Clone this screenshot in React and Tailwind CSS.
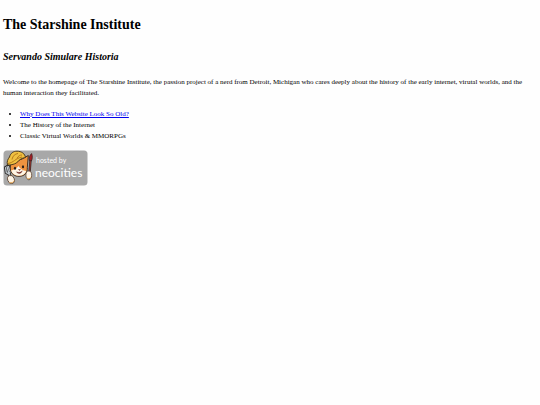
function NeocitiesBadge() {
  return (
    <svg viewBox="0 0 85 36" className="block h-9 w-[85px]" role="img" aria-label="Hosted by Neocities">
      <rect x="0.5" y="0.5" width="84" height="35" rx="3.5" fill="#a8a8a8" />
      {/* fork */}
      <g stroke="#333" strokeWidth="3.2" strokeLinecap="round" fill="none">
        <path d="M2.500 17.500l.8 5 2.700 1.500 1.200-2.500-1.700-5M4 16.500l2 7.500 3 8" />
      </g>
      <g stroke="#c4cbd0" strokeWidth="1.200" strokeLinecap="round" fill="none">
        <path d="M2.500 17.500l.8 5 2.700 1.500 1.200-2.500-1.700-5M4 16.500l2 7.500 3 8" />
      </g>
      {/* paintbrush */}
      <path d="M27.500 10.500L26 29" stroke="#333" strokeWidth="2.400" strokeLinecap="round" />
      <path d="M27.500 11L26 27" stroke="#8c3028" strokeWidth="1.200" />
      <path d="M26.300 10.500c-.6-3 .6-5.500 2.300-7 1 2.400 1 5-.2 7.500z" fill="#a51f25" stroke="#382020" strokeWidth="0.7" />
      {/* cat */}
      <path d="M7.500 13L7.200 19c.8 5 4.500 7.500 8.800 7.300 5.500 0 8.700-3.600 8.300-8.800L25.300 5.500 19 9z" fill="#ee9340" stroke="#30221a" strokeWidth="0.9" />
      <path d="M15.500 16c-2 2.700-5 4-7.500 4.500 1.500 3.700 4.300 5.300 8 5.300 3.700 0 6.300-1.800 7.300-4.800-3.300-.5-6.300-2-7.800-5z" fill="#fff5e5" />
      <path d="M4.500 15C3.500 11.500 5 9 6.500 7 7.500 3 10.500 1.200 14 1.200c4.500 0 8 2.500 8.500 6.300-4 .5-6.500 2.500-9 5.500-3 1.500-6 2.200-9 2z" fill="#f0c141" stroke="#40301a" strokeWidth="0.9" />
      <path d="M9 9.500c1-4 3-5.500 6-6M14 8.500c1-2.500 3-3.500 5-3.500M5 13.500c6-1 7-5 14-6.500" stroke="#b77b1d" strokeWidth="1" fill="none" />
      <ellipse cx="12" cy="18.300" rx="1.100" ry="1.500" fill="#241d1a" />
      <ellipse cx="20" cy="16.800" rx="1.100" ry="1.500" fill="#241d1a" />
      <path d="M15.500 19.500h2l-1 1zM13.500 21.800c2 1.200 4.300.8 5.700-1-.4 2.800-4.200 3.700-5.700 1z" fill="#6e2723" stroke="#6e2723" strokeWidth="0.4" />
      {/* paws */}
      <ellipse cx="8" cy="29.500" rx="3.300" ry="4.200" transform="rotate(-20 8 29.500)" fill="#fff4e5" stroke="#5c4433" strokeWidth="0.8" />
      <ellipse cx="25.800" cy="25.200" rx="2.900" ry="4.200" fill="#fff4e5" stroke="#5c4433" strokeWidth="0.8" />
      <path d="M6.500 32.500c2 1 4-.2 4.500-1.800M23.800 27.700c1 1.800 3 1.500 4-.3" stroke="#e3a552" strokeWidth="1" fill="none" />
      <text x="33" y="13" fill="#fff" fontSize="7" fontFamily="Lato, sans-serif">hosted by</text>
      <text x="32" y="27" fill="#fff" fontSize="12" fontFamily="Lato, sans-serif">neocities</text>
    </svg>
  );
}

export default function App() {
  return (
    <main className="min-h-screen bg-[#fefefe] px-[3px] pt-[13px] font-['Liberation_Serif',serif] text-[7px] leading-[11px] text-black">
      <h1 className="text-[14px] leading-6 font-bold">The Starshine Institute</h1>
      <h2 className="mt-3 text-[10px] leading-4 font-bold italic">Servando Simulare Historia</h2>
      <p className="mt-3">
        Welcome to the homepage of The Starshine Institute, the passion project of a nerd from Detroit, Michigan who
        cares deeply about the history of the early internet, virutal worlds, and the human interaction they
        facilitated.
      </p>
      <ul className="mt-[10px] list-disc pl-[17px]">
        <li>
          <a href="#old" className="text-[#0000ee] underline">Why Does This Website Look So Old?</a>
        </li>
        <li>The History of the Internet</li>
        <li>Classic Virtual Worlds &amp; MMORPGs</li>
      </ul>
      <a href="#neocities" className="mt-2 inline-block">
        <NeocitiesBadge />
      </a>
    </main>
  );
}
